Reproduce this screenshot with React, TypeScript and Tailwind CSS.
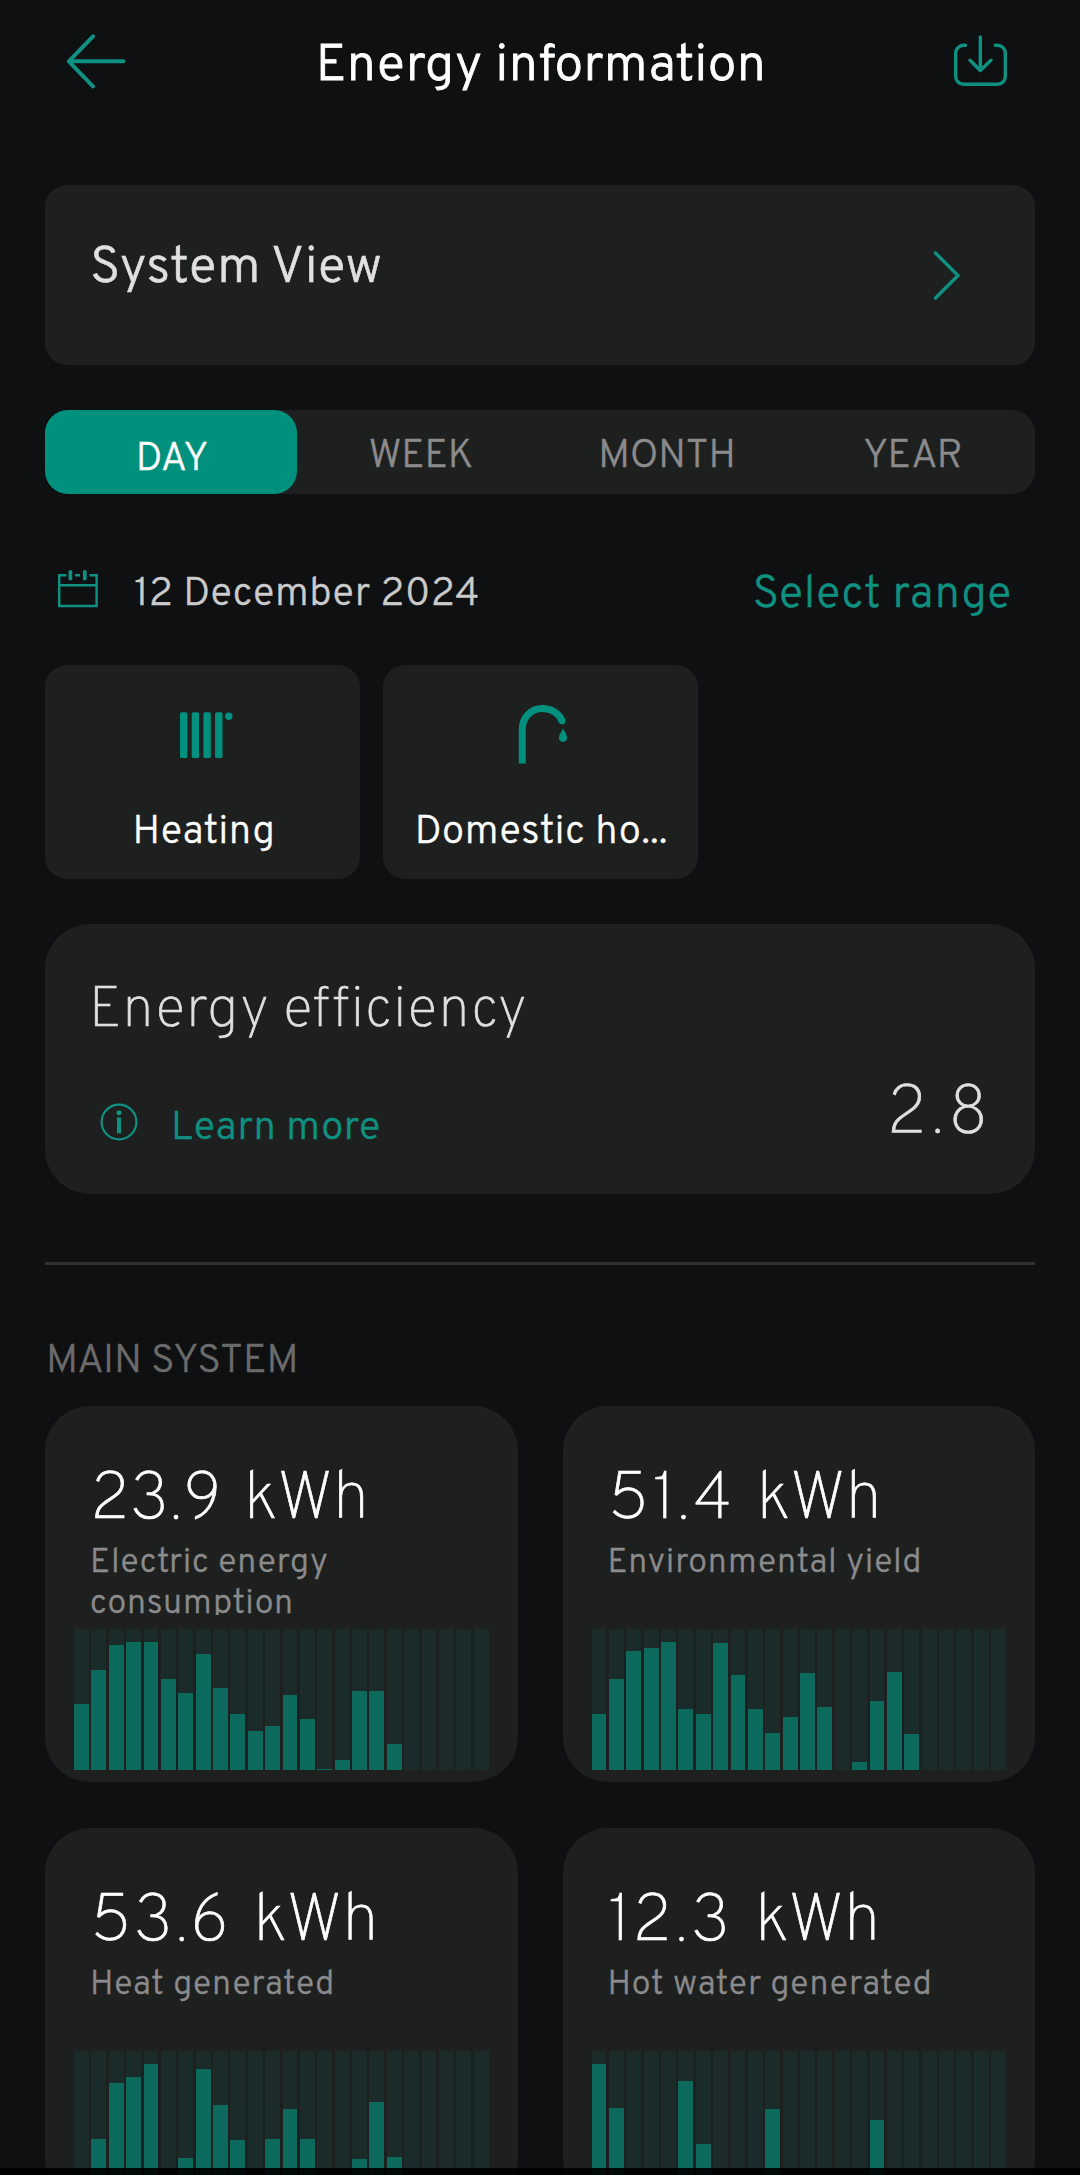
const tabs = ["WEEK", "MONTH", "YEAR"];

// Bar heights are hourly values in pixels of the 141px chart
const cards = [
  {
    value: "23.9",
    tracking: "tracking-[0.2px]",
    label: "Electric energy consumption",
    bars: [66, 100, 125, 128, 128, 91, 77, 115.5, 82, 56, 39, 44, 75, 51, 1, 10, 79, 79, 25.5, 0, 0, 0, 0, 0],
  },
  {
    value: "51.4",
    tracking: "tracking-[2.8px]",
    label: "Environmental yield",
    bars: [56, 91, 119, 122, 128, 61, 56, 126.5, 95, 61, 37, 53, 97, 62.5, 0, 8, 69, 98, 36, 0, 0, 0, 0, 0],
  },
  {
    value: "53.6",
    tracking: "tracking-[2.1px]",
    label: "Heat generated",
    bars: [0, 53, 109, 115, 128, 0, 34, 123, 87, 51.5, 0, 53, 83, 53, 0, 0, 33, 90, 35, 0, 0, 0, 0, 0],
  },
  {
    value: "12.3",
    tracking: "tracking-[2.8px]",
    label: "Hot water generated",
    bars: [128, 84, 0, 0, 0, 111, 48, 0, 0, 0, 83, 0, 0, 0, 0, 0, 72, 0, 0, 0, 0, 0, 0, 0],
  },
];

const BackIcon = () => (
  <svg width="60" height="60" fill="none" stroke="currentColor" strokeWidth="4" strokeLinecap="round" strokeLinejoin="round">
    <path d="M57.5 30.3H2.8M27 5.3L2.8 30.3L27 55.3" />
  </svg>
);

const DownloadIcon = () => (
  <svg width="54" height="54" fill="none" stroke="currentColor" strokeWidth="3.4" strokeLinecap="round" strokeLinejoin="round">
    <path d="M12.5 11.3H10.5a7.8 7.8 0 0 0-7.8 7.8V42.5a7.8 7.8 0 0 0 7.8 7.8H44.5a7.8 7.8 0 0 0 7.8-7.8V19.1a7.8 7.8 0 0 0-7.8-7.8H42.3" />
    <path d="M27.3 3V36.3M17 26.2L27.3 36.5L38 26.2" />
  </svg>
);

const CalendarIcon = () => (
  <svg width="41" height="41" fill="none" stroke="currentColor" strokeWidth="2.4">
    <path d="M9.5 7.3H2.2V38H39.6V7.3H32.5M18 7.3H23M2.2 17.3H39.6" />
    <path d="M13.4 4V10.5M27.8 4V10.5" strokeWidth="3.8" strokeLinecap="round" />
  </svg>
);

const HeatingIcon = () => (
  <svg width="60" height="64" fill="currentColor">
    <rect x="7" y="9.3" width="7.4" height="45.7" rx="1.6" />
    <rect x="18.7" y="9.3" width="7.4" height="45.7" rx="1.6" />
    <rect x="30.4" y="9.3" width="7.4" height="45.7" rx="1.6" />
    <rect x="42.1" y="9.3" width="7.4" height="45.7" rx="1.6" />
    <circle cx="55.8" cy="13.3" r="3.7" />
  </svg>
);

const TapIcon = () => (
  <svg width="60" height="64" fill="none">
    <path d="M11.3 60.5V26C11.3 14.5 20 5.6 31.3 5.6C41 5.6 48.6 11 51 18" stroke="currentColor" strokeWidth="7" />
    <circle cx="51.1" cy="17.9" r="3.4" fill="currentColor" />
    <path d="M52 25.3C53.4 29 56.1 31.5 56.1 34.8A4.1 4.1 0 0 1 47.9 34.8C47.9 31.5 50.6 29 52 25.3Z" fill="currentColor" />
  </svg>
);

const InfoIcon = () => (
  <svg width="38" height="38" fill="none" stroke="currentColor">
    <circle cx="19" cy="19" r="17.4" strokeWidth="2.2" />
    <path d="M19 14.5V30.3" strokeWidth="4" />
    <circle cx="19" cy="9.8" r="2.5" fill="currentColor" stroke="none" />
  </svg>
);

const Chart = ({ bars }: { bars: number[] }) => (
  <div className="mx-[29px] mt-[14px] flex h-[141px] gap-[2.4px]">
    {bars.map((height, i) => (
      <div key={i} className="flex flex-1 items-end bg-[#1a2b29]">
        <div className="w-full bg-[#0b6a5c]" style={{ height }} />
      </div>
    ))}
  </div>
);

export default function App() {
  return (
    <div className="relative h-[2175px] w-[1080px] overflow-hidden bg-[#0e1012] font-[Overpass,Roboto,sans-serif] font-light text-white [-webkit-text-stroke:0.4px]">
      <header className="flex h-[122px] items-center pr-[73px] pl-[66px] text-[#0e9180]">
        <BackIcon />
        <h1 className="flex-1 pt-[11px] pl-[3px] text-center text-[52px] leading-[70px] tracking-[0.5px] text-white [-webkit-text-stroke:0.8px]">
          Energy information
        </h1>
        <DownloadIcon />
      </header>

      <main className="mt-[63px] px-[45px]">
        <section className="flex h-[180px] items-center justify-between rounded-[22px] bg-[#1e201f] pr-[74px] pl-[45px]">
          <h2 className="pb-[10px] text-[51.3px] tracking-[0.5px] text-[#e0e0e0] [-webkit-text-stroke:0.6px]">System View</h2>
          <svg width="29" height="52" fill="none" className="text-[#0e9180]" stroke="currentColor" strokeWidth="3.4" strokeLinecap="round" strokeLinejoin="round">
            <path d="M3.5 4L26 26.5L3.5 49" />
          </svg>
        </section>

        <nav className="mt-[45px] flex h-[84px] rounded-[23px] bg-[#1e201f] text-[39.6px] text-[#8b8b8d]">
          <div className="flex w-[252px] items-center justify-center rounded-[23px] bg-[#00917e] pt-[17px] pl-[2px] text-white">DAY</div>
          {tabs.map((tab) => (
            <div key={tab} className="flex flex-1 items-center justify-center pt-[12px] pl-[2px]">
              {tab}
            </div>
          ))}
        </nav>

        <div className="mt-[72px] flex h-[60px] items-center pr-[23px] pl-[12px] text-[#0e9180]">
          <div className="mb-[15px]">
            <CalendarIcon />
          </div>
          <span className="ml-[36px] flex-1 pb-[2px] text-[40px] tracking-[0.5px] text-[#cbcbcb]">12 December 2024</span>
          <span className="pb-px text-[45px] tracking-[0.8px]">Select range</span>
        </div>

        <div className="mt-[39px] flex gap-[23px] text-center text-[40px] leading-[50px] tracking-[0.6px]">
          <div className="flex h-[214px] w-[315px] flex-col items-center rounded-[22px] bg-[#1e201f] pt-[38px]">
            <div className="text-[#00917e]">
              <HeatingIcon />
            </div>
            <p className="mt-[41px] pl-[3px]">Heating</p>
          </div>
          <div className="flex h-[214px] w-[315px] flex-col items-center rounded-[22px] bg-[#1e201f] pt-[38px]">
            <div className="text-[#00917e]">
              <TapIcon />
            </div>
            <p className="mt-[41px] pl-[2px]">Domestic ho...</p>
          </div>
        </div>

        <section className="mt-[45px] h-[270px] rounded-[45px] bg-[#1e201f] pt-[53px] pr-[43px] pl-[44px] text-[#e0e0e0]">
          <h2 className="text-[57px] leading-[70px] font-thin tracking-[0.7px] [-webkit-text-stroke:0.7px]">Energy efficiency</h2>
          <div className="mt-[33px] flex h-[70px] items-center text-[#0e9180]">
            <div className="ml-[11px] pt-[13px]">
              <InfoIcon />
            </div>
            <span className="ml-[33px] flex-1 pt-[27px] text-[40px] leading-[50px] tracking-[0.65px]">Learn more</span>
            <span className="text-[68px] leading-[70px] font-thin tracking-[3.6px] text-[#e0e0e0] [-webkit-text-stroke:0.7px]">2.8</span>
          </div>
        </section>

        <hr className="mt-[68px] border-t-[3px] border-[#2e3031]" />

        <h3 className="mt-[72px] pl-px text-[40px] leading-[50px] text-[#6b6b6b]">MAIN SYSTEM</h3>

        <div className="mt-[19px] grid grid-cols-2 gap-x-[45px] gap-y-[46px]">
          {cards.map((card) => (
            <section key={card.value} className="h-[376px] rounded-[45px] bg-[#1e201f] pt-[56px]">
              <p className="pl-[45px] text-[66.7px] leading-[80px] font-thin [font-kerning:none] [word-spacing:7px] [-webkit-text-stroke:0.7px]">
                <span className={card.tracking}>{card.value}</span> kWh
              </p>
              <p className="mt-px h-[71.5px] overflow-hidden px-[45px] text-[34px] leading-[41px] tracking-[0.8px] text-[#8b8b8d]">
                {card.label}
              </p>
              <Chart bars={card.bars} />
            </section>
          ))}
        </div>
      </main>

      <div className="absolute inset-x-0 bottom-0 h-[7px] bg-black/90" />
    </div>
  );
}
